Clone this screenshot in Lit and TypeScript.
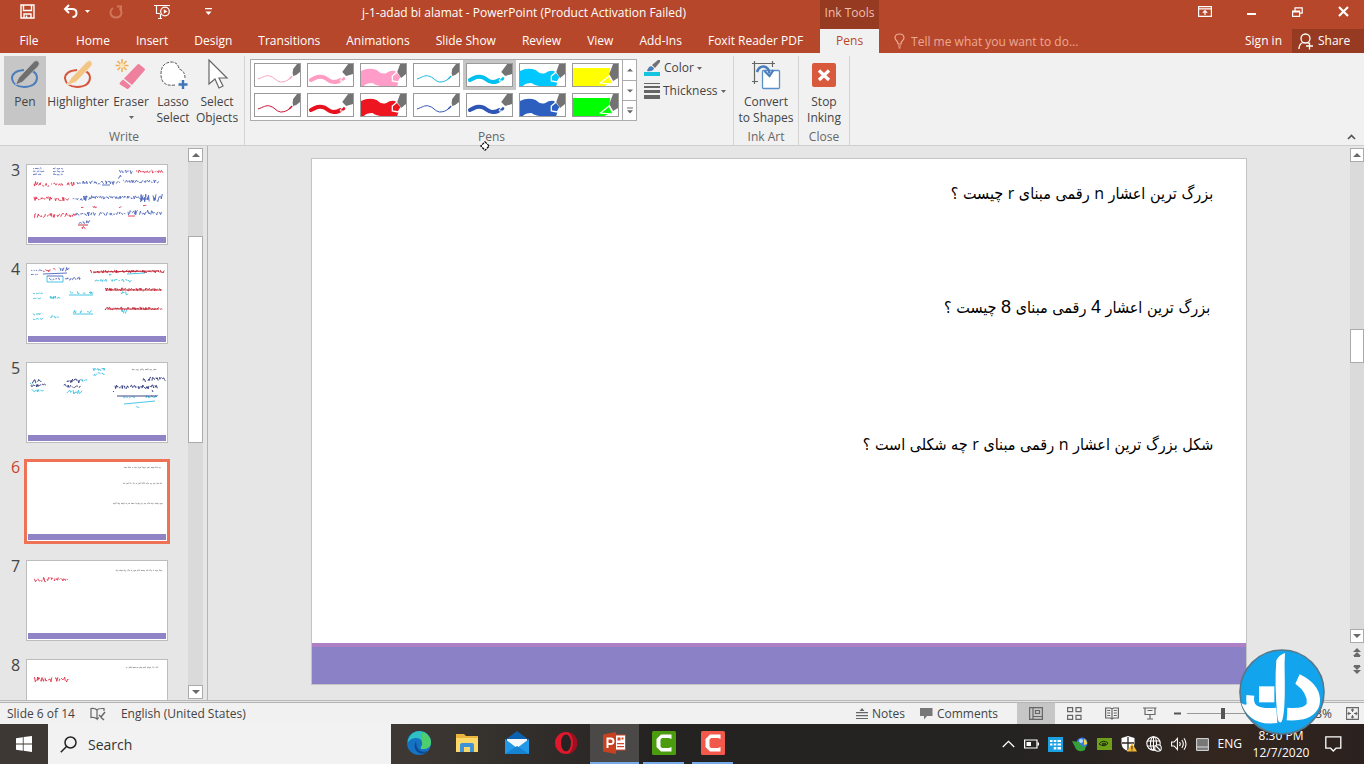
import { LitElement, html, svg, css, nothing } from "lit";
import { customElement, state } from "lit/decorators.js";
import { classMap } from "lit/directives/class-map.js";

type Ink = [number, number, number, number, string];

/* Turns a box into a run of small handwritten-looking strokes. */
function strokes(x: number, y: number, w: number, h: number): string {
  let seed = Math.round(x * 31 + y * 17 + w * 7) + 5;
  const rnd = () => {
    seed = (seed * 1103515245 + 12345) % 2147483648;
    return seed / 2147483648;
  };
  let d = "";
  let cx = x;
  while (cx < x + w) {
    const n = 2 + Math.floor(rnd() * 4);
    d += `M${cx.toFixed(1)} ${(y + rnd() * h).toFixed(1)}`;
    for (let i = 0; i < n; i++) {
      cx += 0.3 + rnd() * 0.8;
      d += `L${cx.toFixed(1)} ${(y + rnd() * h).toFixed(1)}`;
    }
    cx += 0.7 + rnd() * 0.7;
  }
  return d;
}

const B = "#4a63b8";
const R = "#e0304a";
const D = "#c02030";
const C = "#35bfe0";
const N = "#2b3478";
const G = "#777";

interface Thumb {
  n: number;
  ink: Ink[];
  lines?: [number, number, number, number, string][];
}

const THUMBS: Thumb[] = [
  {
    n: 3,
    ink: [
      [6, 3, 8, 1, B], [6, 6, 8, 1, B], [6, 9, 8, 1, B], [26, 3, 9, 1, B], [26, 6, 9, 1, B], [26, 9, 9, 1, B],
      [109, 5, 26, 3, R], [92, 5, 14, 4, B], [91, 10, 4, 4, B],
      [7, 16, 15, 6, R], [24, 18, 10, 3, R], [40, 17, 4, 4, R], [50, 16, 18, 3, B], [71, 16, 22, 4, B], [96, 15, 34, 3, B],
      [7, 31, 18, 5, R], [28, 32, 14, 4, R], [46, 33, 4, 2, B], [53, 30, 9, 6, B], [65, 31, 46, 3, B], [113, 29, 10, 8, B], [126, 28, 9, 9, B],
      [7, 48, 20, 5, R], [30, 48, 16, 4, R], [49, 47, 20, 4, B], [72, 47, 26, 4, B], [101, 45, 34, 5, B],
      [54, 41, 3, 2, R], [66, 41, 3, 2, R], [92, 40, 3, 3, R], [116, 40, 3, 3, R], [52, 55, 12, 4, B], [55, 61, 4, 4, R],
    ],
    lines: [[51, 60, 61, 60, D], [75, 20, 83, 20, B], [101, 51, 108, 51, R], [113, 34, 122, 34, B]],
  },
  {
    n: 4,
    ink: [
      [4, 6, 8, 1, B], [4, 10, 8, 1, B], [16, 4, 3, 4, R], [21, 4, 3, 4, R], [26, 4, 3, 4, R], [32, 3, 3, 4, B], [38, 3, 3, 4, B],
      [22, 14, 11, 2, B], [38, 13, 14, 3, B], [63, 6, 70, 3, D], [78, 24, 57, 3, D], [78, 43, 56, 3, D],
      [68, 15, 10, 3, C], [84, 15, 18, 3, C], [94, 27, 5, 4, C], [94, 46, 6, 4, C], [82, 10, 3, 2, C],
      [6, 29, 8, 1, C], [6, 34, 8, 1, C], [6, 49, 7, 2, C], [6, 54, 7, 2, C], [23, 32, 9, 3, C], [23, 51, 9, 3, C],
      [43, 27, 3, 3, C], [50, 27, 3, 3, C], [56, 27, 3, 3, C], [62, 27, 3, 3, C], [46, 46, 3, 3, C], [53, 46, 3, 3, C], [60, 46, 3, 3, C],
    ],
    lines: [
      [16, 10, 40, 9, B], [20, 12, 20, 18, C], [20, 18, 36, 18, C], [36, 18, 36, 12, C], [20, 12, 36, 12, B],
      [66, 8, 132, 7, D], [80, 26, 134, 26, D], [80, 45, 132, 45, D], [100, 10, 118, 9, C], [42, 31, 66, 31, C], [46, 50, 66, 50, C],
    ],
  },
  {
    n: 5,
    ink: [
      [5, 16, 10, 4, N], [4, 21, 12, 3, N], [5, 26, 11, 3, C], [3, 20, 4, 2, C],
      [40, 16, 13, 4, N], [40, 22, 14, 3, N], [40, 27, 14, 4, C], [54, 16, 5, 3, C], [37, 21, 2, 3, N],
      [66, 5, 10, 3, C], [67, 9, 9, 4, C], [105, 6, 25, 1, G], [116, 15, 4, 4, N], [121, 14, 14, 4, N],
      [88, 22, 42, 4, N], [96, 33, 11, 2, C], [119, 32, 11, 3, C], [109, 43, 4, 2, C],
    ],
    lines: [[90, 33, 130, 33, N], [97, 41, 128, 38, C], [86, 28, 87, 29, N], [125, 27, 126, 29, N]],
  },
  { n: 6, ink: [[97, 5, 37, 1, G], [96, 21, 37, 1, G], [86, 41, 47, 1, G]] },
  { n: 7, ink: [[89, 9, 46, 1, G], [7, 16, 18, 5, R], [27, 16, 8, 4, R], [36, 18, 4, 2, R]] },
  { n: 8, ink: [[99, 7, 33, 1, G], [7, 17, 18, 5, R], [28, 17, 12, 5, R]] },
];

const TABS = ["Home", "Insert", "Design", "Transitions", "Animations", "Slide Show", "Review", "View", "Add-Ins", "Foxit Reader PDF"];

interface Pen {
  kind: "thin" | "mid" | "wide" | "marker";
  color: string;
}

const PENS: Pen[] = [
  { kind: "thin", color: "#f7a3c0" },
  { kind: "mid", color: "#ff9cc2" },
  { kind: "wide", color: "#ff9cc8" },
  { kind: "thin", color: "#17b8dd" },
  { kind: "mid", color: "#00c0f0" },
  { kind: "wide", color: "#00c8ff" },
  { kind: "marker", color: "#ffff00" },
  { kind: "thin", color: "#c8102e" },
  { kind: "mid", color: "#e8111f" },
  { kind: "wide", color: "#ed1620" },
  { kind: "thin", color: "#3355b0" },
  { kind: "mid", color: "#2f55b5" },
  { kind: "wide", color: "#2c5fbe" },
  { kind: "marker", color: "#00ff00" },
];

function penPicture(p: Pen) {
  const line = "M3 15C9 13 11 11 15 12C20 13 21 17 26 18C30 18 33 17 36 14";
  switch (p.kind) {
    case "thin":
      return svg`<path d=${line} fill="none" stroke=${p.color} stroke-width="1"/>
        <path d="M35 15l3-3" stroke=${p.color} stroke-width="1.5"/>
        <path d="M46 0h-3L39 5q-1 4 0 7q4-1 7-4V0z" fill="#737373"/>`;
    case "mid":
      return svg`<path d="M3 16C9 13 11 12 15 13C20 14 21 18 26 18C29 18 31 18 33 16" fill="none" stroke=${p.color} stroke-width="4" stroke-linecap="round"/>
        <path d="M33 16l4-4 2 3q-2 3-6 2z" fill=${p.color} stroke="#fff" stroke-width="1"/>
        <path d="M46 0h-5L35 8l4 4 7-2z" fill="#737373"/>`;
    case "wide":
      return svg`<path d="M0 7Q8 3 16 6q5 5 10 3 4-3 9-2l4 9-2 6H20q-6-1-8-3-7 0-9 3H0z" fill=${p.color}/>
        <path d="M32 17V12l5-4 4 5-3 5z" fill=${p.color} stroke="#fff" stroke-width="1.3"/>
        <path d="M46 0h-6l-3 8 4 6 5-4z" fill="#737373"/>`;
    default:
      return svg`<path d="M0 4h38l-2 16-4 2H0z" fill=${p.color}/>
        <path d="M28 19l9-7 4 8z" fill=${p.color} stroke="#fff" stroke-width="1.2"/>
        <path d="M46 0h-5l-4 10 4 7 5-3z" fill="#737373"/>`;
  }
}

const I = {
  save: html`<svg width="15" height="15" viewBox="0 0 15 15" fill="none" stroke="#fff" stroke-width="1.4"><path d="M1 1h13v13H1zM3.500 1v5.500h8V1M4 14v-4h7v4M6.500 14v-2.500"/></svg>`,
  undo: html`<svg width="16" height="15" viewBox="0 0 16 15" fill="none" stroke="#fff" stroke-width="2"><path d="M6 1L2 5l4 4M2.500 5H9q4.500 0 4.500 4T9.500 13"/></svg>`,
  redo: html`<svg width="14" height="14" viewBox="0 0 14 14" fill="none" stroke="#d0775b" stroke-width="2"><path d="M4 3Q1 5 1.500 8q1 4.500 5.500 4.500T12.500 8q0-3-2-4.500M8 1.500h4V6"/></svg>`,
  show: html`<svg width="17" height="16" viewBox="0 0 17 16" fill="none" stroke="#fff" stroke-width="1.2"><path d="M0 1.500h16M2.500 1.500v8H6M4 14.500h4M6.500 10v4.500"/><circle cx="11" cy="7.500" r="4.300"/><path d="M9.800 5.200l3.500 2.300-3.500 2.300z" fill="#fff" stroke="none"/></svg>`,
  customize: html`<svg width="7" height="8" viewBox="0 0 7 8" fill="#fff"><path d="M0 0h7v1.300H0zM0.500 3.500h6L3.500 7z"/></svg>`,
  ribbon: html`<svg width="14" height="11" viewBox="0 0 14 11" fill="none" stroke="#fff" stroke-width="1.200"><path d="M.6.6h12.800v9.800H.6zM.6 2.800h12.800M7 9V4.800M4.800 6.800L7 4.600l2.200 2.200"/></svg>`,
  min: html`<svg width="10" height="10" viewBox="0 0 10 10"><path d="M0 6h9v2H0z" fill="#fff"/></svg>`,
  restore: html`<svg width="11" height="10" viewBox="0 0 11 10" fill="none" stroke="#fff" stroke-width="1.200"><path d="M.6 4h7v5.400h-7zM.6 5h7M3 3.500V.8h7.200v5.400H8"/></svg>`,
  close: html`<svg width="11" height="11" viewBox="0 0 11 11"><path d="M1 1l9 9M10 1l-9 9" stroke="#fff" stroke-width="2.200"/></svg>`,
  bulb: html`<svg width="12" height="16" viewBox="0 0 12 16" fill="none" stroke="#eba995" stroke-width="1.200"><path d="M4 11Q4 9 2.600 7.800 1 6.500 1 4.800 1.300 1 5.500 1T10 4.800q0 1.700-1.600 3Q7 9 7 11zM4 13h3M4.500 14.800h2"/></svg>`,
  person: html`<svg width="16" height="17" viewBox="0 0 16 17" fill="none" stroke="#fff" stroke-width="1.300"><circle cx="7.500" cy="5.500" r="4.500"/><path d="M1 16q0-5 4-6.500M9.500 9.500l1.500 1M11.500 9.500v7M8 13h7"/></svg>`,
  pen: html`<svg width="32" height="32" viewBox="0 0 32 32"><path d="M15 11Q3 12 3 19.500 4 27.500 15 28q12.500-.5 13-9 0-5-5-7" fill="none" stroke="#4a7ebb" stroke-width="2"/><path d="M6.500 26L9.500 19 25 2.500Q27 .5 29.500 2.500 31 4.500 29.500 7L13.500 23z" fill="#6f6f6f" stroke="#c6c6c6" stroke-width=".8"/></svg>`,
  highlighter: html`<svg width="32" height="32" viewBox="0 0 32 32"><path d="M15 11Q3 12 3 19.500 4 27.500 15 28q12.500-.5 13-9 0-5-5-7" fill="none" stroke="#d7553c" stroke-width="2"/><path d="M4.500 26L9.500 18.500 25 2.500Q27 .5 29.500 2.500 31 4.500 29.500 7L14 23 9 25z" fill="#f3c583" stroke="#f1f1f1" stroke-width=".8"/></svg>`,
  eraser: html`<svg width="32" height="32" viewBox="0 0 32 32"><g stroke="#f0b055" stroke-width="1.600"><path d="M7 0v13M.5 6.500h13M2.500 2l9 9M11.500 2l-9 9"/></g><circle cx="7" cy="6.500" r="2.500" fill="#fbe3b8"/><path d="M9 19.500L22.500 5.500q1-1 2 0l5 4q1 1 0 2L17 26z" fill="#ee7f9d"/><path d="M5 23.500l3-3 8 6.500-2.500 2.500q-1 1-2 0L5 25.500q-1-1 0-2z" fill="#ee7f9d"/></svg>`,
  lasso: html`<svg width="32" height="32" viewBox="0 0 32 32"><path d="M17 26Q4 28 4 15 4 4 14 3q7 0 8 7 6 2 6 8v3h-6v5z" fill="#fff"/><path d="M18 26Q4 28 4 15 4 4 14 3q7 0 8 7 6 2 6 9" fill="none" stroke="#555" stroke-dasharray="3 1.200"/><path d="M26 21v9M21.500 25.500h9" stroke="#3f74b8" stroke-width="2.400"/></svg>`,
  arrow: html`<svg width="32" height="32" viewBox="0 0 32 32"><path d="M8 1v24l6-5 4 9 4-2-4-8h8z" fill="#fff" stroke="#666" stroke-width="1.200"/></svg>`,
  color: html`<svg width="17" height="16" viewBox="0 0 17 16"><path d="M0 12h16v4H0z" fill="#17c4e0"/><path d="M3 11q1-4 4-5l3 2q-1 4-7 3z" fill="#4a7ebb"/><path d="M8 5l6-5h2v2l-5 6z" fill="#707070"/></svg>`,
  thick: html`<svg width="16" height="16" viewBox="0 0 16 16" fill="#666"><path d="M0 0h16v1H0zM0 3h16v2H0zM0 7h16v3H0zM0 12h16v4H0z"/></svg>`,
  convert: html`<svg width="32" height="32" viewBox="0 0 32 32" fill="none"><path d="M4.500 2v23M2 4.500h23M22.500 2v6M2 22.500h6" stroke="#666" stroke-width="1.200"/><rect x="12.500" y="11.500" width="17" height="18" rx="1" fill="#fff" stroke="#5b8fcb" stroke-width="1.300"/><path d="M7 13q2-6 7-5.500 5 1 5.500 7" stroke="#4a7ebb" stroke-width="2.600"/><path d="M14.500 12l5 5 4-6" stroke="#4a7ebb" stroke-width="2.200"/></svg>`,
  stop: html`<svg width="32" height="32" viewBox="0 0 32 32"><rect x="4" y="4" width="24" height="24" rx="2" fill="#d9593d"/><path d="M11 11.500l10 9.500M21 11.500L11 21" stroke="#fff" stroke-width="3.200"/></svg>`,
  collapse: html`<svg width="9" height="6" viewBox="0 0 9 6"><path d="M1 5l3.500-3.500L8 5" fill="none" stroke="#555" stroke-width="1.700"/></svg>`,
  up: html`<svg width="8" height="4" viewBox="0 0 8 4"><path d="M0 4L4 0l4 4z" fill="#6a6a6a"/></svg>`,
  down: html`<svg width="8" height="4" viewBox="0 0 8 4"><path d="M0 0h8L4 4z" fill="#6a6a6a"/></svg>`,
  more: html`<svg width="7" height="8" viewBox="0 0 7 8"><path d="M0 0h7v1H0zM0 3h7L3.500 7z" fill="#6a6a6a"/></svg>`,
  drop: html`<svg width="5" height="3" viewBox="0 0 5 3"><path d="M0 0h5L2.500 3z" fill="#666"/></svg>`,
  dropLight: html`<svg width="5" height="3" viewBox="0 0 5 3"><path d="M0 0h5L2.500 3z" fill="#fff"/></svg>`,
  prev: html`<svg width="8" height="9" viewBox="0 0 8 9"><path d="M0 4L4 0l4 4zM0 8L4 4l4 4zM1 8h6v1H1z" fill="#6a6a6a"/></svg>`,
  next: html`<svg width="8" height="9" viewBox="0 0 8 9"><path d="M1 0h6v1H1zM0 1h8L4 5zM0 5h8L4 9z" fill="#6a6a6a"/></svg>`,
  spell: html`<svg width="16" height="14" viewBox="0 0 16 14" fill="none" stroke="#666" stroke-width="1.200"><path d="M7 3Q5 1 1 1.500v9q4-.5 6 1.500V3q1-1.500 5-1.500h2V4M7 12q1-1 2-1.300"/><path d="M9 8l2 2 4-5M11 10.500l3 2.500" stroke-width="1.500"/></svg>`,
  notes: html`<svg width="12" height="11" viewBox="0 0 12 11"><path d="M3.500 3L6 0l2.500 3zM0 4h12v1.200H0zM0 7h12v1.200H0zM0 10h12v1H0z" fill="#666"/></svg>`,
  comments: html`<svg width="13" height="12" viewBox="0 0 13 12"><path d="M0 0h12.500v8H7l-3 3.500V8H0z" fill="#777"/></svg>`,
  normal: html`<svg width="14" height="13" viewBox="0 0 14 13" fill="none" stroke="#666" stroke-width="1.200"><path d="M.6.6h12.800v11.800H.6zM4 .6v11.800M6.500 3.500h4v3h-4zM4 9.500h9.400"/></svg>`,
  sorter: html`<svg width="15" height="13" viewBox="0 0 15 13" fill="none" stroke="#666" stroke-width="1.200"><path d="M.6.6h5v4h-5zM9 .6h5v4H9zM.6 8.400h5v4h-5zM9 8.400h5v4H9z"/></svg>`,
  reading: html`<svg width="14" height="13" viewBox="0 0 14 13" fill="none" stroke="#666" stroke-width="1.200"><path d="M.6 1H5.500L7 2l1.500-1h4.900v10H8.500L7 12l-1.500-1H.6zM7 2v10M2.200 3.500h3M2.200 6h3M2.200 8.500h3M8.800 3.500h3M8.800 6h3M8.800 8.500h3"/></svg>`,
  slideshow: html`<svg width="14" height="13" viewBox="0 0 14 13" fill="none" stroke="#666" stroke-width="1.200"><path d="M0 1h13.500M2 1v6.500h10V1M4.500 3.500h5M7 7.500V12M4 12h6"/></svg>`,
  fit: html`<svg width="13" height="13" viewBox="0 0 13 13" fill="none" stroke="#666" stroke-width="1.100"><path d="M.6.6h11.800v11.800H.6z"/><path d="M6.500 2v3M6.500 8v3M2 6.500h3M8 6.500h3M5.200 3.300l1.300-1.300 1.300 1.300M5.200 9.700L6.500 11l1.300-1.300M3.300 5.200L2 6.500l1.300 1.300M9.700 5.200L11 6.500 9.700 7.800"/></svg>`,
  windows: html`<svg width="16" height="16" viewBox="0 0 16 16" fill="#fff"><path d="M0 2.200L6.800 1.200V7.600H0zM7.600 1.100L16 0v7.600H7.600zM0 8.400h6.800v6.400L0 13.800zM7.600 8.400H16V16l-8.400-1.200z"/></svg>`,
  search: html`<svg width="17" height="17" viewBox="0 0 17 17" fill="none" stroke="#222" stroke-width="1.500"><circle cx="10.500" cy="6.500" r="5.500"/><path d="M6.500 10.500L.8 16.200"/></svg>`,
  logo: html`<svg width="86" height="86" viewBox="0 0 258 258"><circle cx="129" cy="129" r="126" fill="#12a5ee" stroke="#55788a" stroke-width="5"/><g fill="#fff"><path d="M112 34q8-16 26-22-2 30-1 60 2 100-5 132-3 18-9 16-6 0-8-20Q106 110 112 34z"/><path d="M60 112h46v48H60z"/><path d="M22 138l24 2q-4 22 8 30 18 10 58 6 2 30 3 46-52 6-78-16-22-16-30-44 10 8 16 4-2-14-1-28z"/><path d="M182 76q58 28 61 74 2 40-40 58-22 8-60 6 2-20 2-38 50 4 58-12 4-32-34-60z"/></g></svg>`,
  crosshair: html`<svg width="10" height="10" viewBox="0 0 10 10"><path d="M5 .8L9.200 5 5 9.200.8 5z" fill="#fff" stroke="#000" stroke-width="1.200" stroke-dasharray="2.500 .8"/></svg>`,
};

const A = {
  edge: html`<svg width="24" height="24" viewBox="0 0 24 24"><circle cx="12" cy="12" r="12" fill="#1673c4"/><path d="M1 9Q4 0 13 0q10 1 11 11 0 7-8 7-3 0-2-2 2-2 1-5-1-4-6-4-5 0-8 4z" fill="#2fc0c4"/><path d="M15 1q8 3 9 10 0 7-8 7-3 0-2-2 2-2 1-5z" fill="#4fcf6c"/><path d="M9 10q-4 8 3 12 5 2 9-2-7 2-10-2-2-3-2-8z" fill="#0b4a92"/></svg>`,
  folder: html`<svg width="23" height="20" viewBox="0 0 23 20"><path d="M0 1h8l2 2h12v16H0z" fill="#e9b53c"/><path d="M0 5h22v14H0z" fill="#fbd868"/><path d="M4 19v-7q0-2 2-2h10q2 0 2 2v7h-4v-5H8v5z" fill="#3f91d8"/></svg>`,
  mail: html`<svg width="24" height="24" viewBox="0 0 24 24"><path d="M0 9L12 0l12 9z" fill="#0c62b0"/><path d="M2 8h20v10H2z" fill="#f4f7fb"/><path d="M0 8l12 9 12-9v15H0z" fill="#2298e8"/><path d="M0 23l12-8 12 8z" fill="#1682d4"/></svg>`,
  opera: html`<svg width="24" height="24" viewBox="0 0 24 24"><ellipse cx="12" cy="12" rx="11" ry="11" fill="#e0182d"/><path d="M14 1q9 2 9 11t-9 11q5-4 5-11T14 1z" fill="#9c1020"/><ellipse cx="12" cy="12" rx="5" ry="8.500" fill="#262322"/></svg>`,
  ppt: html`<svg width="24" height="22" viewBox="0 0 24 22"><path d="M12 3h10.500v15H12z" fill="#fff" stroke="#d0472a"/><path d="M14 11h7v1.200h-7zM14 14h7v1.200h-7zM14.500 5.500h3v3h-3zM18.500 5.500h2v2h-2z" fill="#d0472a"/><path d="M0 2.500L13 0v22L0 19.500z" fill="#c9401f"/><path d="M4.500 16V6.500h3.200q2.800 0 2.800 2.800t-3 2.700H4.500" fill="none" stroke="#fff" stroke-width="2"/></svg>`,
  camGreen: html`<svg width="24" height="24" viewBox="0 0 24 24"><rect width="24" height="24" rx="1.500" fill="#4c9c10"/><path d="M19.500 3.500V8L17 7H10L8.500 8.500v7L10 17h7l2.500-1v4.500H9L4.500 16V8L9 3.500z" fill="#fff"/></svg>`,
  camRed: html`<svg width="24" height="24" viewBox="0 0 24 24"><rect width="24" height="24" rx="1.500" fill="#f2594b"/><path d="M19.500 3.500V8L17 7H10L8.500 8.500v7L10 17h7l2.500-1v4.500H9L4.500 16V8L9 3.500z" fill="#fff"/></svg>`,
};

const T = {
  chevron: html`<svg width="13" height="8" viewBox="0 0 13 8"><path d="M.8 7L6.500 1.300 12.200 7" fill="none" stroke="#fff" stroke-width="1.300"/></svg>`,
  battery: html`<svg width="15" height="10" viewBox="0 0 15 10"><path d="M.6 1h12.400v8H.6z" fill="none" stroke="#fff" stroke-width="1.200"/><path d="M2.500 3h4.500v4H2.500zM13.500 3.500H15v3h-1.500z" fill="#fff"/></svg>`,
  grid: html`<svg width="15" height="15" viewBox="0 0 15 15"><path d="M0 0h15v15H0z" fill="#1ba1e2"/><path d="M2 3h2.500v2H2zM5.700 3h2.600v2H5.700zM9.500 3H13v2H9.500zM2 6.500h2.500v2H2zM5.700 6.500h2.600v2H5.700zM9.500 6.500H13v2H9.500zM5.700 10h2.600v2.500H5.700zM9.500 10H13v2.500H9.500z" fill="#fff"/></svg>`,
  idm: html`<svg width="16" height="15" viewBox="0 0 16 15"><circle cx="10" cy="6" r="5.500" fill="#3b7be0"/><circle cx="9" cy="4" r="2" fill="#b8dcf8"/><path d="M0 4l7 1 3 5 4-2-1 5q-6 3-9-1z" fill="#34a038"/><path d="M12 2q3 1 3 5l-3 1z" fill="#f0d648"/></svg>`,
  nvidia: html`<svg width="15" height="12" viewBox="0 0 15 12"><path d="M0 0h15v12H0z" fill="#6da018"/><path d="M2 6q4-5 9-1-3 5-9 1zM5 6q2-2 4 0-2 2-4 0z" fill="none" stroke="#1d2a08" stroke-width="1"/></svg>`,
  shield: html`<svg width="16" height="16" viewBox="0 0 16 16"><path d="M7 0l6.500 2v5q0 6-6.500 8Q.5 13 .5 7V2z" fill="#fff"/><path d="M7 1v13M1 7h12" stroke="#302724" stroke-width="1.300"/><path d="M11 7l5 8.500H6z" fill="#f5b82e"/><path d="M10.500 10h1v3h-1zM10.500 13.500h1v1h-1z" fill="#222"/></svg>`,
  globe: html`<svg width="16" height="16" viewBox="0 0 16 16" fill="none" stroke="#fff" stroke-width="1.100"><circle cx="7.500" cy="7.500" r="6.700"/><ellipse cx="7.500" cy="7.500" rx="3" ry="6.700"/><path d="M1 5h13M1 10h13M7.500 1v13"/><circle cx="12" cy="12" r="3.300" fill="#302724"/><path d="M10 10l4 4"/></svg>`,
  speaker: html`<svg width="16" height="14" viewBox="0 0 16 14" fill="none" stroke="#fff" stroke-width="1.100"><path d="M.6 5h2.600l3.200-3.500v11L3.200 9H.6zM8.500 5q1.500 2 0 4M10.800 3q3 4 0 8M13 1.200q4 5.800 0 11.600"/></svg>`,
  pad: html`<svg width="13" height="13" viewBox="0 0 13 13"><path d="M.6.6h11.800v11.800H.6z" fill="#777" stroke="#ddd"/><path d="M.6 9h11.800" stroke="#ddd"/></svg>`,
  action: html`<svg width="17" height="16" viewBox="0 0 17 16"><path d="M.8.8h15v11.400H11L8.300 15l-2.700-2.800H.8z" fill="none" stroke="#fff" stroke-width="1.300"/></svg>`,
};

const APPS = [
  { name: "Microsoft Edge", icon: A.edge },
  { name: "File Explorer", icon: A.folder },
  { name: "Mail", icon: A.mail },
  { name: "Opera", icon: A.opera },
  { name: "PowerPoint", icon: A.ppt, active: true },
  { name: "Camtasia", icon: A.camGreen, running: true },
  { name: "Camtasia Recorder", icon: A.camRed, running: true },
];

@customElement("app-root")
export class AppRoot extends LitElement {
  @state() private tool = "Pen";
  @state() private pen = 4;
  @state() private slide = 6;
  @state() private zoom = 73;

  static styles = css`
    :host {
      display: flex;
      flex-direction: column;
      height: 100vh;
      overflow: hidden;
      font: 12px/16px "Open Sans", "Noto Sans", sans-serif;
      color: #444;
      background: #e6e6e6;
    }
    * { box-sizing: border-box; }
    svg { display: block; flex: none; }
    button, input, a {
      font: inherit;
      color: inherit;
      background: none;
      border: 0;
      padding: 0;
      margin: 0;
      outline: 0;
      text-decoration: none;
      white-space: nowrap;
    }

    .titlebar { display: flex; height: 29px; background: #b7472a; color: #fff; flex: none; }
    .quick { display: flex; align-items: center; width: 228px; padding: 0 16px 6px 20px; gap: 26px; }
    .undo { display: flex; align-items: center; gap: 6px; margin: 0 -7px 0 2px; }
    .show { margin-left: 5px; }
    .custom { margin-left: 8px; }
    .title { width: 592px; text-align: center; line-height: 26px; }
    .context { width: 59px; background: #963a22; color: #f0bfae; text-align: center; line-height: 26px; }
    .window { display: flex; margin-left: auto; padding: 0 15px 6px 0; gap: 35px; align-items: center; }

    .tabs { display: flex; height: 24px; background: #b7472a; color: #fff; flex: none; }
    .tab { padding: 0 13px; line-height: 24px; }
    .file { width: 58px; margin-right: 5px; }
    .tab.active { width: 59px; margin-left: 4px; padding: 0; background: #f1f1f1; color: #b7472a; text-align: center; }
    .tell { display: flex; align-items: center; gap: 5px; margin-left: 15px; }
    .tell input { width: 180px; height: 20px; }
    .tell input::placeholder { color: #eba995; opacity: 1; }
    .signin { margin-left: auto; padding: 0 10px; }
    .share { display: flex; align-items: center; gap: 4px; width: 72px; padding-left: 6px; background: #963a22; }

    .ribbon { display: flex; height: 93px; padding: 3px 0 0; background: #f1f1f1; border-bottom: 1px solid #cfcfcf; flex: none; }
    .group { display: flex; flex-direction: column; justify-content: space-between; border-right: 1px solid #d4d4d4; }
    .group h2 { margin: 0; font-weight: 400; font-size: 12px; line-height: 16px; color: #666; text-align: center; }
    .row { display: flex; }
    .write { width: 245px; padding-left: 4px; }
    .pens { width: 489px; padding-left: 5px; }
    .inkart { width: 65px; }
    .closing { width: 51px; }
    .big { display: flex; flex-direction: column; align-items: center; height: 69px; padding-top: 3px; min-width: 42px; white-space: pre-line; }
    .big svg { margin-bottom: 3px; }
    .big .mark svg { margin: 6px 0 0; }
    .wide { min-width: 64px; }
    .medium { min-width: 46px; }
    .full { width: 100%; }
    .pressed { background: #c6c6c6; }
    .collapse { margin: auto 8px 5px auto; }

    .gallery { display: flex; height: 62px; margin-top: 3px; border: 1px solid #ababab; background: #fff; }
    .cells { display: grid; grid-template-columns: repeat(7, 53px); grid-auto-rows: 30px; }
    .cell { display: flex; padding: 3px; align-items: center; }
    .cell svg { border: 1px solid #9a9a9a; background: #fff; }
    .cell.chosen { background: #c6c6c6; }
    .steps { display: grid; grid-template-rows: repeat(3, 20px); width: 14px; border-left: 1px solid #ababab; }
    .steps button { display: flex; align-items: center; justify-content: center; }
    .steps button + button { border-top: 1px solid #ababab; }
    .steps svg { width: 6px; }
    .options { display: flex; flex-direction: column; margin: 1px 0 0 7px; gap: 1px; }
    .options button { display: flex; align-items: center; gap: 3px; height: 22px; }

    .work { display: flex; flex: 1; min-height: 0; }
    .pane { display: flex; width: 208px; flex: none; border-right: 1px solid #b4b4b4; }
    .list { flex: 1; margin: 0; padding: 16px 0 0 7px; list-style: none; overflow: hidden; }
    .item { display: flex; height: 99px; align-items: flex-start; }
    .num { width: 17px; font-size: 16px; line-height: 16px; text-align: center; }
    .thumb { display: flex; width: 146px; height: 85px; border: 2px solid transparent; }
    .paper { display: grid; width: 100%; height: 81px; background: #fff; border: 1px solid #bdbdbd; grid-template-rows: 72px 6px 1px; }
    .paper svg { width: 100%; height: 72px; }
    .band { margin: 0 1px; background: #9083c6; }
    .item.current .thumb { border-color: #ee7356; }
    .item.current .paper { border-color: #ee7356; }
    .item.current .num { color: #c8442a; }

    .scroll { display: flex; flex-direction: column; width: 15px; background: #dadada; margin: 2px 4px 1px 0; flex: none; }
    .scroll button { display: flex; align-items: center; justify-content: center; height: 14px; border: 1px solid #ababab; background: #fff; flex: none; }
    .scroll .thumbbar { background: #fff; border: 1px solid #ababab; }
    .pane .space { flex: 74; }
    .pane .thumbbar { flex: 206; }
    .pane .rest { flex: 243; }
    .main .scroll { width: 14px; margin: 2px 0 0; flex: 1; }
    .main .space { flex: 167; }
    .main .thumbbar { flex: 32; }
    .main .rest { flex: 267; }
    .side { display: flex; flex-direction: column; }
    .jumps { display: flex; flex-direction: column; align-items: center; gap: 8px; padding: 5px 0 26px; }

    .main { display: flex; flex: 1; min-width: 0; }
    .stage { display: flex; flex: 1; align-items: center; justify-content: center; padding-bottom: 3px; }
    .slide { display: flex; flex-direction: column; width: 82%; aspect-ratio: 16 / 9; padding: 22px 33px 0 0; background: #fff; border: 1px solid #c4c4c4; direction: rtl; color: #000; font: 16px/26px "DejaVu Sans Condensed", "DejaVu Sans", sans-serif; }
    .slide p { margin: 0 0 88px; }
    .slide .second { margin-right: 3px; margin-bottom: 111px; }
    .slide .latin { font: 16px/20px "Open Sans", sans-serif; }
    .slide .digit { font: 18px/20px "Liberation Sans", sans-serif; }
    .foot { height: 41px; margin: auto -33px 0 0; background: #8a81c7; border-top: 4px solid #ad80c6; }

    .status { display: flex; align-items: center; height: 22px; margin-top: 1px; border-top: 1px solid #b4b4b4; background: #f1f1f1; flex: none; padding-left: 7px; }
    .edge { height: 1px; background: #b8b8b8; flex: none; }
    .status button { display: flex; align-items: center; gap: 4px; }
    .lang { margin-left: 15px; }
    .spell { margin-left: 15px; }
    .notes { margin-left: auto; }
    .comments { margin: 0 19px 0 15px; }
    .view { width: 38px; height: 21px; justify-content: center; }
    .zoom { display: flex; align-items: center; gap: 2px; margin-left: 5px; }
    .zoom input { appearance: none; width: 72px; height: 12px; margin: 0 4px; background: linear-gradient(#999, #999) center / 100% 1px no-repeat; }
    .zoom input::-webkit-slider-thumb { appearance: none; width: 4px; height: 11px; background: #555; }
    .zoom output { width: 58px; text-align: right; }
    .fit { margin: 0 5px 0 14px; }

    .taskbar { display: flex; height: 40px; flex: none; color: #fff; background: linear-gradient(90deg, #3d3833 0, #3d3833 30%, #252322 48%, #252322 75%, #33261f 90%, #2b211e 100%); }
    .start { display: flex; align-items: center; justify-content: center; width: 48px; }
    .find { display: flex; align-items: center; gap: 11px; width: 343px; padding-left: 12px; background: #f2f2f2; color: #333; margin-right: 3px; }
    .find input { flex: 1; height: 24px; font-size: 14px; }
    .find input::placeholder { color: #333; opacity: 1; }
    .app { display: flex; align-items: center; justify-content: center; width: 49px; border-bottom: 2px solid transparent; }
    .app.active { background: #4b4947; border-color: #76aae8; }
    .app.running { width: 41px; margin: 0 4px; border-color: #76aae8; }
    .tray { display: flex; align-items: center; gap: 9px; margin-left: auto; }
    .clock { width: 60px; text-align: center; line-height: 17px; }
    .action { margin: 0 22px 0 5px; }

    .brand { position: fixed; right: 39px; bottom: 29px; }
    .cursor { position: fixed; left: 480px; top: 141px; }
  `;

  private big(name: string, label: string, icon: unknown, cls = "", menu = false) {
    const pressed = this.tool === name;
    return html`<button class="big ${cls} ${pressed ? "pressed" : ""}" aria-pressed=${pressed} @click=${() => (this.tool = name)}>
      ${icon}<span>${label}</span>${menu ? html`<span class="mark">${I.drop}</span>` : nothing}
    </button>`;
  }

  private thumb(t: Thumb) {
    return html`<li class=${classMap({ item: true, current: t.n === this.slide })}>
      <span class="num">${t.n}</span>
      <button class="thumb" aria-label="Slide ${t.n}" @click=${() => (this.slide = t.n)}>
        <span class="paper">
          <svg viewBox="0 0 140 72" fill="none" stroke-width=".9">
            ${t.ink.map(([x, y, w, h, c]) => svg`<path d=${strokes(x, y, w, h)} stroke=${c} opacity=${c === G ? 0.8 : 1}/>`)}
            ${(t.lines ?? []).map(([a, b, c, d, s]) => svg`<path d="M${a} ${b}L${c} ${d}" stroke=${s}/>`)}
          </svg>
          <span class="band"></span>
        </span>
      </button>
    </li>`;
  }

  render() {
    return html`
      <header class="titlebar">
        <div class="quick">
          <button aria-label="Save">${I.save}</button>
          <button class="undo" aria-label="Undo">${I.undo}${I.dropLight}</button>
          <button aria-label="Repeat">${I.redo}</button>
          <button class="show" aria-label="Start From Beginning">${I.show}</button>
          <button class="custom" aria-label="Customize Quick Access Toolbar">${I.customize}</button>
        </div>
        <div class="title">j-1-adad bi alamat - PowerPoint (Product Activation Failed)</div>
        <div class="context">Ink Tools</div>
        <div class="window">
          <button aria-label="Ribbon Display Options">${I.ribbon}</button>
          <button aria-label="Minimize">${I.min}</button>
          <button aria-label="Restore Down">${I.restore}</button>
          <button aria-label="Close">${I.close}</button>
        </div>
      </header>

      <nav class="tabs">
        <button class="tab file">File</button>
        ${TABS.map((t) => html`<button class="tab">${t}</button>`)}
        <button class="tab active">Pens</button>
        <label class="tell">${I.bulb}<input type="text" aria-label="Tell me what you want to do" placeholder="Tell me what you want to do..." /></label>
        <a class="tab signin" href="#">Sign in</a>
        <button class="share">${I.person}Share</button>
      </nav>

      <section class="ribbon">
        <div class="group write">
          <div class="row">
            ${this.big("Pen", "Pen", I.pen)}
            ${this.big("Highlighter", "Highlighter", I.highlighter, "wide")}
            ${this.big("Eraser", "Eraser", I.eraser, "", true)}
            ${this.big("Lasso", "Lasso\nSelect", I.lasso)}
            ${this.big("Select", "Select\nObjects", I.arrow, "medium")}
          </div>
          <h2>Write</h2>
        </div>
        <div class="group pens">
          <div class="row">
            <div class="gallery">
              <div class="cells">
                ${PENS.map((p, i) => html`<button class=${classMap({ cell: true, chosen: i === this.pen })} aria-label="Pen ${i + 1}" @click=${() => (this.pen = i)}>
                  <svg width="47" height="24" viewBox="0 0 46 22" preserveAspectRatio="none">${penPicture(p)}</svg>
                </button>`)}
              </div>
              <div class="steps">
                <button aria-label="Previous row">${I.up}</button>
                <button aria-label="Next row">${I.down}</button>
                <button aria-label="More">${I.more}</button>
              </div>
            </div>
            <div class="options">
              <button>${I.color}Color${I.drop}</button>
              <button>${I.thick}Thickness${I.drop}</button>
            </div>
          </div>
          <h2>Pens</h2>
        </div>
        <div class="group inkart">
          ${this.big("Convert", "Convert\nto Shapes", I.convert, "full")}
          <h2>Ink Art</h2>
        </div>
        <div class="group closing">
          ${this.big("Stop", "Stop\nInking", I.stop, "full")}
          <h2>Close</h2>
        </div>
        <button class="collapse" aria-label="Collapse the Ribbon">${I.collapse}</button>
      </section>

      <main class="work">
        <aside class="pane">
          <ol class="list">${THUMBS.map((t) => this.thumb(t))}</ol>
          <div class="scroll">
            <button aria-label="Scroll up">${I.up}</button>
            <span class="space"></span><span class="thumbbar"></span><span class="rest"></span>
            <button aria-label="Scroll down">${I.down}</button>
          </div>
        </aside>
        <div class="main">
          <div class="stage">
            <article class="slide" lang="fa">
              <p>بزرگ ترین اعشار <span class="latin">n</span> رقمی مبنای <span class="latin">r</span> چیست ؟</p>
              <p class="second">بزرگ ترین اعشار <span class="digit">4</span> رقمی مبنای <span class="digit">8</span> چیست ؟</p>
              <p>شکل بزرگ ترین اعشار <span class="latin">n</span> رقمی مبنای <span class="latin">r</span> چه شکلی است ؟</p>
              <div class="foot"></div>
            </article>
          </div>
          <div class="side">
            <div class="scroll">
              <button aria-label="Scroll up">${I.up}</button>
              <span class="space"></span><span class="thumbbar"></span><span class="rest"></span>
              <button aria-label="Scroll down">${I.down}</button>
            </div>
            <div class="jumps">
              <button aria-label="Previous Slide">${I.prev}</button>
              <button aria-label="Next Slide">${I.next}</button>
            </div>
          </div>
        </div>
      </main>

      <div class="edge"></div>
      <footer class="status">
        <span>Slide 6 of 14</span>
        <button class="spell" aria-label="Spelling">${I.spell}</button>
        <button class="lang">English (United States)</button>
        <button class="notes">${I.notes}Notes</button>
        <button class="comments">${I.comments}Comments</button>
        <button class="view pressed" aria-label="Normal">${I.normal}</button>
        <button class="view" aria-label="Slide Sorter">${I.sorter}</button>
        <button class="view" aria-label="Reading View">${I.reading}</button>
        <button class="view" aria-label="Slide Show">${I.slideshow}</button>
        <div class="zoom">
          <button aria-label="Zoom out"><svg width="7" height="3" viewBox="0 0 7 3"><path d="M0 .5h7v2H0z" fill="#555" /></svg></button>
          <input type="range" min="10" max="136" aria-label="Zoom" .value=${String(this.zoom)} @input=${(e: Event) => (this.zoom = Number((e.target as HTMLInputElement).value))} />
          <button aria-label="Zoom in"><svg width="7" height="7" viewBox="0 0 7 7"><path d="M0 3h7v1H0zM3 0h1v7H3z" fill="#555" /></svg></button>
          <output>${this.zoom}%</output>
        </div>
        <button class="fit" aria-label="Fit slide to current window">${I.fit}</button>
      </footer>

      <footer class="taskbar">
        <button class="start" aria-label="Start">${I.windows}</button>
        <label class="find">${I.search}<input type="text" aria-label="Search" placeholder="Search" /></label>
        ${APPS.map((a) => html`<button class=${classMap({ app: true, active: !!a.active, running: !!a.running })} aria-label=${a.name}>${a.icon}</button>`)}
        <div class="tray">
          ${T.chevron}${T.battery}${T.grid}${T.idm}${T.nvidia}${T.shield}${T.globe}${T.speaker}${T.pad}
          <span>ENG</span>
          <div class="clock">8:30 PM<br />12/7/2020</div>
          <button class="action" aria-label="Notifications">${T.action}</button>
        </div>
      </footer>

      <div class="brand">${I.logo}</div>
      <div class="cursor">${I.crosshair}</div>
    `;
  }
}
